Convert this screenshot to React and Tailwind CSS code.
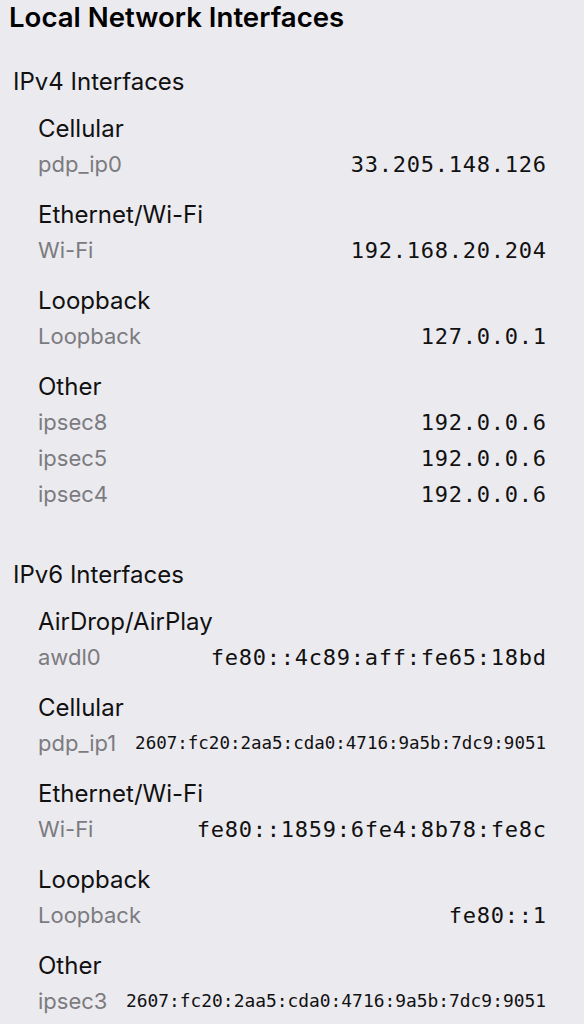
import React from "react";

const sans = { fontFamily: "Inter, 'Noto Sans', sans-serif" };
const mono = { fontFamily: "'DejaVu Sans Mono', 'Liberation Mono', monospace" };

const ipv4 = [
  { name: "Cellular", rows: [{ id: "pdp_ip0", ip: "33.205.148.126" }] },
  { name: "Ethernet/Wi-Fi", rows: [{ id: "Wi-Fi", ip: "192.168.20.204" }] },
  { name: "Loopback", rows: [{ id: "Loopback", ip: "127.0.0.1" }] },
  {
    name: "Other",
    rows: [
      { id: "ipsec8", ip: "192.0.0.6" },
      { id: "ipsec5", ip: "192.0.0.6" },
      { id: "ipsec4", ip: "192.0.0.6" },
    ],
  },
];

const ipv6 = [
  { name: "AirDrop/AirPlay", rows: [{ id: "awdl0", ip: "fe80::4c89:aff:fe65:18bd" }] },
  {
    name: "Cellular",
    rows: [{ id: "pdp_ip1", ip: "2607:fc20:2aa5:cda0:4716:9a5b:7dc9:9051", small: "text-[17.5px]" }],
  },
  { name: "Ethernet/Wi-Fi", rows: [{ id: "Wi-Fi", ip: "fe80::1859:6fe4:8b78:fe8c" }] },
  { name: "Loopback", rows: [{ id: "Loopback", ip: "fe80::1" }] },
  {
    name: "Other",
    rows: [{ id: "ipsec3", ip: "2607:fc20:2aa5:cda0:4716:9a5b:7dc9:9051", small: "text-[17.9px]" }],
  },
];

const Group = ({ group }) => (
  <div className="flex flex-col mt-[15px] first:mt-0">
    <div className="h-[35px] flex items-center text-[24px] text-[#111] pl-[38px]">{group.name}</div>
    {group.rows.map((row) => (
      <div key={row.id} className="h-[36px] flex items-center justify-between pl-[38px] pr-[38px]">
        <span className="text-[22px] text-[#7b7b80]">{row.id}</span>
        <span
          className={`${row.small ? row.small : "text-[22px] tracking-[0.75px] -mr-[0.75px]"} text-[#111]`}
          style={mono}
        >
          {row.ip}
        </span>
      </div>
    ))}
  </div>
);

const Section = ({ title, groups, className }) => (
  <div className={className}>
    <div className="h-[35px] flex items-center text-[24px] text-[#111] pl-[13px]">{title}</div>
    <div className="flex flex-col mt-[12px]">
      {groups.map((g) => (
        <Group key={g.name} group={g} />
      ))}
    </div>
  </div>
);

export default function App() {
  return (
    <div className="w-[584px] h-[1024px] overflow-hidden bg-[#ebeaef]" style={sans}>
      <h1 className="h-[35px] flex items-center pl-[9px] text-[27.6px] font-semibold text-black">
        Local Network Interfaces
      </h1>
      <Section title="IPv4 Interfaces" groups={ipv4} className="mt-[29px]" />
      <Section title="IPv6 Interfaces" groups={ipv6} className="mt-[45px]" />
    </div>
  );
}
